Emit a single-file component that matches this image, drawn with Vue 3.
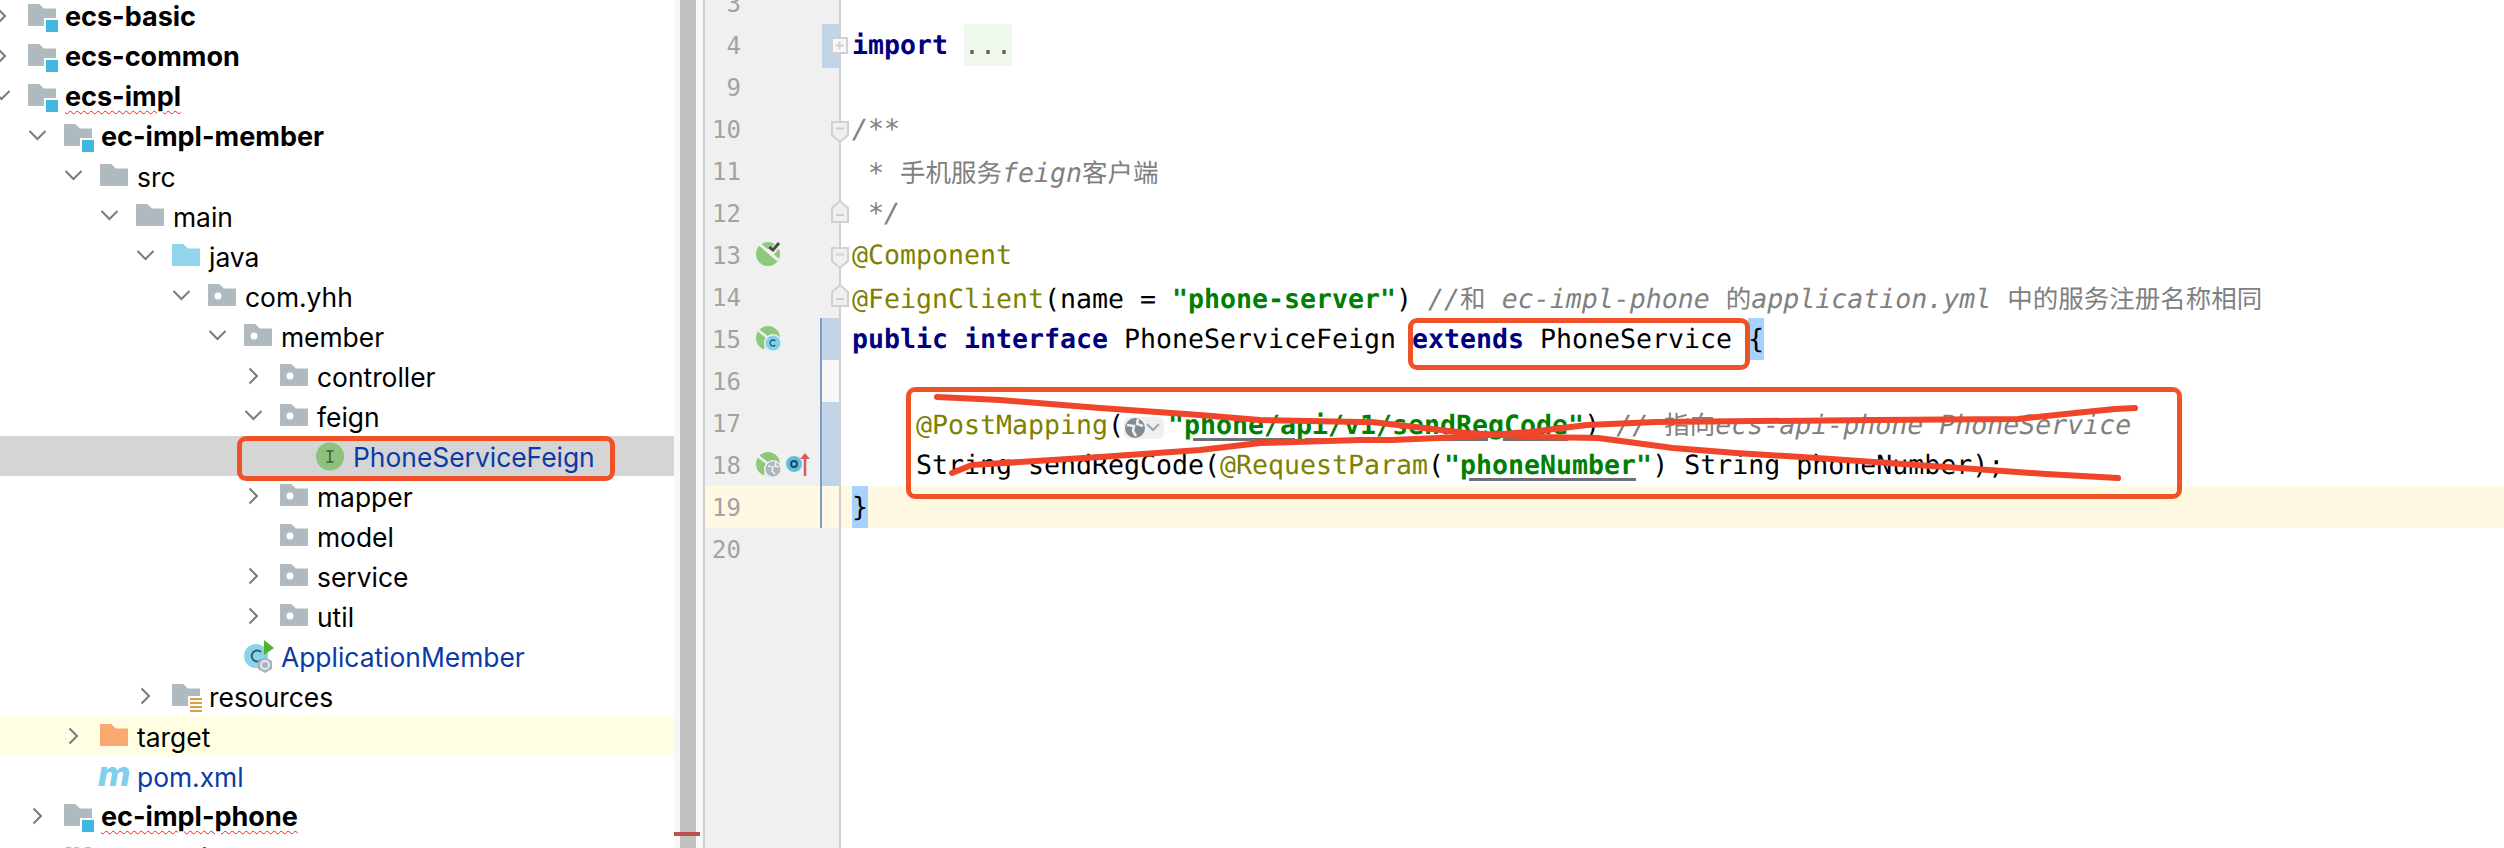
<script setup>
const rows = [
  { t: 'ecs-basic', l: 0, i: 'mod', c: 'r', b: 1 },
  { t: 'ecs-common', l: 0, i: 'mod', c: 'r', b: 1 },
  { t: 'ecs-impl', l: 0, i: 'mod', c: 'd', b: 1, w: 1 },
  { t: 'ec-impl-member', l: 1, i: 'mod', c: 'd', b: 1 },
  { t: 'src', l: 2, i: 'dir', c: 'd' },
  { t: 'main', l: 3, i: 'dir', c: 'd' },
  { t: 'java', l: 4, i: 'src', c: 'd' },
  { t: 'com.yhh', l: 5, i: 'pkg', c: 'd' },
  { t: 'member', l: 6, i: 'pkg', c: 'd' },
  { t: 'controller', l: 7, i: 'pkg', c: 'r' },
  { t: 'feign', l: 7, i: 'pkg', c: 'd' },
  { t: 'PhoneServiceFeign', l: 8, i: 'int', blue: 1, sel: 1 },
  { t: 'mapper', l: 7, i: 'pkg', c: 'r' },
  { t: 'model', l: 7, i: 'pkg' },
  { t: 'service', l: 7, i: 'pkg', c: 'r' },
  { t: 'util', l: 7, i: 'pkg', c: 'r' },
  { t: 'ApplicationMember', l: 6, i: 'app', blue: 1 },
  { t: 'resources', l: 4, i: 'res', c: 'r' },
  { t: 'target', l: 2, i: 'tgt', c: 'r', hl: 1 },
  { t: 'pom.xml', l: 2, i: 'pom', blue: 1 },
  { t: 'ec-impl-phone', l: 1, i: 'mod', c: 'r', b: 1, w: 1 },
  { t: 'pom.xml', l: 1, i: 'pom', blue: 1 }
]
const lines = [3, 4, 9, 10, 11, 12, 13, 14, 15, 16, 17, 18, 19, 20]
const folderPath = 'M0 0H11L16 4.500H28V22H0Z'
</script>

<template>
  <div class="screen">
    <div class="tree">
      <div
        v-for="(r, n) in rows"
        :key="n"
        class="row"
        :class="{ sel: r.sel, hl: r.hl }"
        :style="{ paddingLeft: r.l * 36 + 'px' }"
      >
        <svg class="chev" width="36" height="40" viewBox="0 0 36 40">
          <path v-if="r.c === 'd'" d="M1.500 15L9.500 23L17.500 15" />
          <path v-if="r.c === 'r'" d="M5.500 12.500L13 20L5.500 27.500" />
        </svg>
        <svg class="ico" width="30" height="40" viewBox="0 0 30 40">
          <template v-if="r.i === 'mod'">
            <path :d="folderPath" transform="translate(0 8)" fill="#afb9c0" />
            <rect x="16" y="22" width="15" height="18" fill="#fff" />
            <rect x="18" y="24" width="12" height="12" fill="#40b6e0" />
          </template>
          <path v-if="r.i === 'dir'" :d="folderPath" transform="translate(0 8)" fill="#afb9c0" />
          <path v-if="r.i === 'src'" :d="folderPath" transform="translate(0 8)" fill="#90d5ec" />
          <path v-if="r.i === 'tgt'" :d="folderPath" transform="translate(0 8)" fill="#f9a870" />
          <template v-if="r.i === 'pkg'">
            <path :d="folderPath" transform="translate(0 8)" fill="#afb9c0" />
            <circle cx="10" cy="20" r="3.500" fill="#fff" />
          </template>
          <template v-if="r.i === 'res'">
            <path :d="folderPath" transform="translate(0 8)" fill="#afb9c0" />
            <rect x="16" y="20" width="15" height="20" fill="#fff" />
            <path d="M18 23H30M18 27H30M18 31H30M18 35H30" stroke="#dfa13f" stroke-width="2" />
          </template>
          <template v-if="r.i === 'int'">
            <circle cx="14" cy="20.500" r="14" fill="#8cc27b" />
            <path d="M10.500 15H17.500M14 15V26M10.500 26H17.500" stroke="#3f5b3a" stroke-width="1.600" fill="none" />
          </template>
          <template v-if="r.i === 'app'">
            <circle cx="12" cy="20" r="12" fill="#8ad3ec" />
            <path d="M17 16A5.500 5.500 0 1 0 17 24" stroke="#3c5a68" stroke-width="2" fill="none" />
            <path d="M20 4L30 12L20 19Z" fill="#4fb32e" />
            <path d="M21 21L28 25V33L21 37L14 33V25Z" fill="#a7b3bc" />
            <circle cx="21" cy="29" r="4" fill="none" stroke="#e3eaee" stroke-width="2" />
          </template>
          <text v-if="r.i === 'pom'" x="-2" y="30" class="mglyph">m</text>
        </svg>
        <span class="name" :class="{ bold: r.b, blue: r.blue, wavy: r.w }">{{ r.t }}</span>
      </div>
    </div>

    <div class="track">
      <div class="thumb"></div>
      <div class="err"></div>
    </div>

    <div class="editor">
      <div class="gutter">
        <div v-for="n in lines" :key="n" class="gl" :class="'g' + n">
          <span class="num">{{ n }}</span>
          <svg class="gi" width="54" height="42" viewBox="0 0 54 42">
            <g v-if="n === 13">
              <circle cx="12" cy="20" r="12" fill="#8cc97a" />
              <path d="M2 9L22 26" stroke="#f0f0f0" stroke-width="3" />
              <path d="M12 14L17 17L24 8" stroke="#f0f0f0" stroke-width="6" fill="none" />
              <path d="M13 13L17 16L23 9" stroke="#4a4a4a" stroke-width="3" fill="none" />
            </g>
            <g v-if="n === 15 || n === 18">
              <circle cx="12" cy="20" r="12" fill="#8cc97a" />
              <path d="M2 12L12 20L9 32" stroke="#f0f0f0" stroke-width="2.500" fill="none" />
              <circle cx="17" cy="25" r="9" fill="#f0f0f0" />
            </g>
            <g v-if="n === 15">
              <circle cx="17" cy="25" r="7.500" fill="#7fd0ea" />
              <path d="M19.300 23A3 3 0 1 0 19.300 27" stroke="#2f5a6c" stroke-width="1.300" fill="none" />
            </g>
            <g v-if="n === 18">
              <circle cx="17" cy="25" r="7.500" fill="#a9b7c0" />
              <path d="M12 22L17 23L16 27L19 30M20 18L19 22L23 23" stroke="#f0f0f0" stroke-width="1.500" fill="none" />
              <circle cx="38" cy="20" r="8" fill="#62bfe0" />
              <circle cx="38" cy="20" r="3" fill="none" stroke="#24485a" stroke-width="2" />
              <path d="M49 32V12" stroke="#dc5a64" stroke-width="2.500" />
              <path d="M49 9L54 15H44Z" fill="#dc5a64" />
            </g>
          </svg>
          <svg class="fold" width="20" height="42" viewBox="0 0 20 42">
            <g fill="#f0f0f0" stroke="#d0d0d0" stroke-width="2">
              <g v-if="n === 4">
                <rect x="2" y="14" width="15" height="15" fill="#f7f7f7" />
                <path d="M5.500 21.500H13.500M9.500 17.500V25.500" fill="none" />
              </g>
              <g v-if="n === 10 || n === 13">
                <path d="M2 14H18V27L10 34L2 27Z" />
                <path d="M6 20.500H14" fill="none" />
              </g>
              <g v-if="n === 12 || n === 14">
                <path d="M2 30H18V16L10 9L2 16Z" />
                <path d="M6 23H14" fill="none" />
              </g>
            </g>
          </svg>
        </div>
      </div>

      <div class="code">
        <div class="ln"></div>
        <div class="ln"><b class="kw">import</b> <span class="folded">...</span></div>
        <div class="ln"></div>
        <div class="ln"><i class="cm">/**</i></div>
        <div class="ln"><i class="cm"> * <span class="cjk">手机服务</span>feign<span class="cjk">客户端</span></i></div>
        <div class="ln"><i class="cm"> */</i></div>
        <div class="ln"><span class="an">@Component</span></div>
        <div class="ln"><span class="an">@FeignClient</span>(name = <b class="st">"phone-server"</b>) <i class="cm">//<span class="cjk">和</span> ec-impl-phone <span class="cjk">的</span>application.yml <span class="cjk">中的服务注册名称相同</span></i></div>
        <div class="ln"><b class="kw">public interface</b> PhoneServiceFeign <b class="kw">extends</b> PhoneService <span class="brace">{</span></div>
        <div class="ln"></div>
        <div class="ln ind"><span class="an">@PostMapping</span>(<span class="inlay"><svg width="20" height="20" viewBox="0 0 20 20"><circle cx="10" cy="10" r="10" fill="#7f8b95" /><path d="M2 7L9 8L8 13L11 18M13 1L12 6L18 8" stroke="#f0f0f0" stroke-width="2.500" fill="none" /></svg><svg width="16" height="20" viewBox="0 0 16 20"><path d="M2 6L8 12L14 6" stroke="#9aa7b0" stroke-width="2" fill="none" /></svg></span><b class="st">"<u>phone/api/v1/sendRegCode</u>"</b>) <i class="cm">// <span class="cjk">指向</span>ecs-api-phone PhoneService</i></div>
        <div class="ln ind">String sendRegCode(<span class="an">@RequestParam</span>(<b class="st">"<u>phoneNumber</u>"</b>) String phoneNumber);</div>
        <div class="ln cur"><span class="brace">}</span></div>
        <div class="ln"></div>
      </div>
    </div>

    <div class="mark m1"></div>
    <div class="mark m2"></div>
    <div class="mark m3"></div>
    <svg class="strokes" width="2504" height="848" viewBox="0 0 2504 848">
      <path d="M937 397L1000 400L1100 408L1200 415L1260 420L1360 422L1372 422L1415 427L1466 433L1541 437L1598 438L1621 441L1673 448L1736 453L1817 458L1931 466L1989 470L2046 474L2118 478" />
      <path d="M952 473L972 465L1100 457L1200 450L1260 443L1360 440L1392 440L1461 437L1530 432L1587 425L1656 422L1874 420L2018 419L2075 413L2115 409L2135 408" />
    </svg>
  </div>
</template>

<style>
html, body { margin: 0; background: #fff; }
</style>

<style scoped>
.screen {
  position: relative;
  display: flex;
  width: 2504px;
  height: 848px;
  overflow: hidden;
  background: #fff;
}
.tree {
  width: 674px;
  flex: none;
  margin-top: -4px;
  overflow: hidden;
}
.row {
  display: flex;
  align-items: center;
  height: 40px;
  margin-left: -8px;
  box-sizing: border-box;
}
.row.sel { background: #d5d5d5; }
.row.hl { background: #fffee2; }
.chev { flex: none; }
.chev path { fill: none; stroke: #7a7a7a; stroke-width: 2; }
.ico { flex: none; margin-right: 7px; overflow: visible; }
.mglyph {
  font-family: Inter, "Liberation Sans", sans-serif;
  font-size: 35px;
  font-weight: 800;
  font-style: italic;
  fill: #7fcfee;
}
.name {
  font-family: Inter, "Liberation Sans", sans-serif;
  font-size: 26.400px;
  color: #000;
  white-space: nowrap;
  line-height: 30px;
  padding-top: 2px;
}
.name.bold { font-weight: 700; font-size: 27px; }
.name.blue { color: #0b3aa5; }
.name.wavy {
  text-decoration: underline wavy #f42020 1px;
  text-underline-offset: 4px;
}
.track {
  position: relative;
  flex: none;
  width: 29px;
  background: #f7f7f7;
}
.thumb {
  position: absolute;
  left: 6px;
  top: 0;
  bottom: 0;
  width: 16px;
  background: #c2c2c2;
}
.err {
  position: absolute;
  left: 0;
  top: 832px;
  width: 26px;
  height: 4px;
  background: #c0504d;
}
.editor {
  position: relative;
  flex: 1;
  display: flex;
  margin-top: -18px;
  align-items: flex-start;
}
.gutter {
  flex: none;
  width: 134px;
  border-left: 2px solid #d0d0d0;
  border-right: 2px solid #d0d0d0;
  background: #f0f0f0;
  min-height: 900px;
}
.gl {
  position: relative;
  display: flex;
  height: 42px;
  align-items: center;
}
.gl.g19 { background: #fff9e4; }
.num {
  flex: none;
  width: 36px;
  padding-top: 2px;
  text-align: right;
  font-family: "DejaVu Sans Mono", monospace;
  font-size: 24px;
  color: #a3a3a3;
}
.gi { flex: none; margin-left: 15px; }
.g4::after, .g15::after, .g16::after, .g17::after, .g18::after {
  content: "";
  position: absolute;
  left: 117px;
  right: 0;
  top: 0;
  bottom: 0;
  background: #c2d5e8;
}
.g16::after { background: #f7f7f7; }
.g4::after { bottom: -2px; }
.g15::before, .g16::before, .g17::before, .g18::before, .g19::before {
  content: "";
  position: absolute;
  left: 115px;
  width: 2px;
  top: 0;
  bottom: 0;
  background: #7f9cbf;
}
.fold {
  position: absolute;
  left: 125px;
  top: 0;
  z-index: 1;
}
.code {
  flex: 1;
  min-width: 0;
  padding-left: 11px;
}
.ln {
  height: 42px;
  line-height: 44px;
  font-family: "DejaVu Sans Mono", "Noto Sans CJK SC", monospace;
  font-size: 26.580px;
  text-rendering: geometricPrecision;
  white-space: pre;
  color: #000;
}
.ln.ind { padding-left: 64px; }
.ln.cur {
  background: #fff9e4;
  margin-left: -11px;
  padding-left: 11px;
}
.kw { color: #000080; }
.st { color: #008000; }
.an { color: #808000; }
.cm { color: #808080; }
.cjk {
  font-family: "Noto Sans CJK SC", sans-serif;
  font-style: normal;
  font-size: 25.500px;
}
.st u { text-decoration-color: #707070; text-underline-offset: 4px; text-decoration-thickness: 3px; }
.folded {
  display: inline-block;
  vertical-align: top;
  width: 48px;
  height: 42px;
  background: #eef8ec;
  color: #606060;
  text-align: center;
}
.brace {
  display: inline-block;
  vertical-align: top;
  width: 16px;
  height: 42px;
  background: #a6d2ff;
}
.inlay {
  display: inline-flex;
  align-items: center;
  box-sizing: border-box;
  width: 40px;
  height: 22px;
  margin-right: 4px;
  padding-left: 1px;
  border-radius: 6px;
  background: #f0f0f0;
  vertical-align: -4px;
}
.mark {
  position: absolute;
  box-sizing: border-box;
  border: 5px solid #f05228;
  border-radius: 9px;
}
.m1 { left: 237px; top: 436px; width: 378px; height: 45px; }
.m2 { left: 1408px; top: 318px; width: 342px; height: 52px; }
.m3 { left: 906px; top: 387px; width: 1276px; height: 112px; }
.strokes {
  position: absolute;
  left: 0;
  top: 0;
  fill: none;
  stroke: #f0452a;
  stroke-width: 6;
  stroke-linecap: round;
  stroke-linejoin: round;
}
</style>
